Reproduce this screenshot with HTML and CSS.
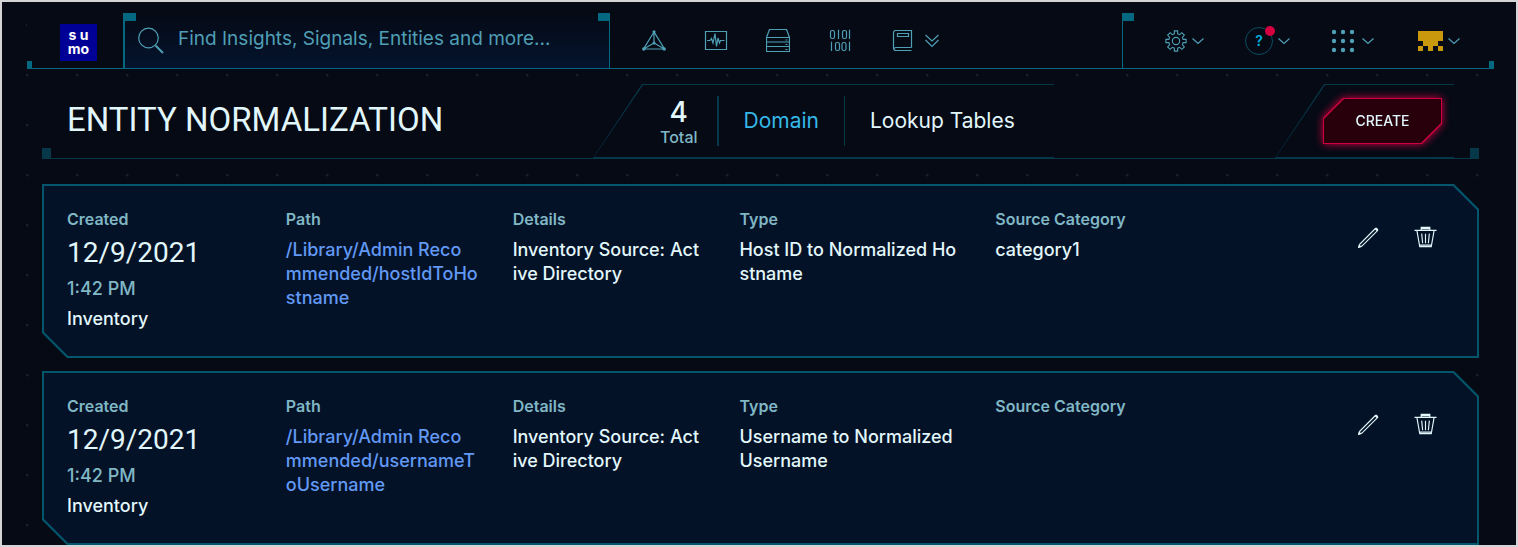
FILE: index.html
```
<!DOCTYPE html>
<html lang="en">
<head>
<meta charset="utf-8">
<title>Entity Normalization</title>
<link rel="stylesheet" href="styles.css">
</head>
<body>
<svg class="sprite" width="0" height="0" aria-hidden="true">
  <symbol id="chevron" viewBox="0 0 12 8"><path d="M.5 1.500 6 6.500 11.500 1.500"/></symbol>
  <symbol id="pencil" viewBox="0 0 24 24"><path d="M1.800 22.200 3 18.800 19.200 2.600C20 1.800 22.200 4 21.400 4.800L5.200 21Z"/><path d="M1.200 22.800 2 19 5 22ZM18.400 3.200 20.800 5.600 22.200 4 20 1.800Z" class="solid"/></symbol>
  <symbol id="trash" viewBox="0 0 24 24"><path d="M.5 4.500H23.500M7.500 4V1.500H16.500V4M3 4.500 6 21.500H18L21 4.500M8 8 9 18M12 8V18M16 8 15 18M7.500 2.800H16.500M5.800 20H18.200"/></symbol>
</svg>

<header class="topbar">
  <a class="logo" href="#" aria-label="Sumo home"><span class="logo-mark">s u<br>mo</span></a>
  <form class="search" role="search">
    <svg class="search-icon" viewBox="0 0 26 27" aria-hidden="true"><circle cx="10.500" cy="11" r="9.800"/><path class="handle" d="M17.500 18.500 25 26"/></svg>
    <input type="search" aria-label="Search" placeholder="Find Insights, Signals, Entities and more...">
  </form>
  <nav class="nav" aria-label="Main">
    <a href="#" aria-label="Insights"><svg viewBox="0 0 24 24"><path d="M12 3 1.500 20H22.500ZM12 3V14M12 14 1.500 20M12 14 22.500 20"/><g class="solid"><circle cx="12" cy="2.800" r="1.600"/><circle cx="12" cy="14" r="1.500"/><circle cx="1.800" cy="20" r="1.700"/><circle cx="22.200" cy="20" r="1.700"/></g></svg></a>
    <a href="#" aria-label="Signals"><svg viewBox="0 0 24 24"><path d="M1.500 2.500H22.500V20.500H1.500Z"/><path d="M3 11.500H6L7.500 9.500 9 14 11 4.500 12.500 17.500 14 9 15.500 14 16.500 11.500H20.500"/></svg></a>
    <a href="#" aria-label="Entities"><svg viewBox="0 0 24 24"><path d="M.5 8.500 3.500.5H20.500L23.500 8.500V22.500H.5ZM.5 8.500H23.500M.5 13H23.500M.5 17.500H23.500"/><path d="M19.500 11H21.500M19.500 15.500H21.500M19.500 20.500H21.500"/></svg></a>
    <a href="#" aria-label="Records"><svg viewBox="0 0 24 24"><rect x="2.500" y="1.500" width="4" height="8" rx="1.800"/><rect x="14.500" y="1.500" width="4" height="8" rx="1.800"/><rect x="7.500" y="13.500" width="4" height="8" rx="1.800"/><rect x="14" y="13.500" width="4" height="8" rx="1.800"/><path d="M10.500.8V10M21.500.8V10M3.500 12.800V22M21.500 12.800V22"/></svg></a>
    <a class="with-more" href="#" aria-label="Content"><svg viewBox="0 0 24 24"><path d="M21.500 18.500V1.500H5.500Q3.500 1.500 3.500 4V19Q3.500 21.500 6 21.500H21.500M21.500 18.500H6Q4 18.500 4 20M7.500 4.500H18.500V7.500H7.500Z"/></svg><svg class="more" viewBox="0 0 14 14"><path d="M.5 1 7 7 13.500 1M.5 6 7 12.500 13.500 6"/></svg></a>
  </nav>
  <div class="tools">
    <button type="button" aria-label="Settings"><svg class="gear" viewBox="0 0 24 24"><circle cx="12" cy="12" r="4"/><path d="M10.200 1H13.800V4.200L16 5.100 18.400 2.900 21.100 5.600 18.900 8 19.800 10.200H23V13.800H19.800L18.900 16 21.100 18.400 18.400 21.100 16 18.900 13.800 19.800V23H10.200V19.800L8 18.900 5.600 21.100 2.900 18.400 5.100 16 4.200 13.800H1V10.200H4.200L5.100 8 2.900 5.600 5.600 2.900 8 5.100 10.200 4.200Z"/></svg><svg class="chev"><use href="#chevron"/></svg></button>
    <button type="button" aria-label="Help"><span class="help">?</span><svg class="chev"><use href="#chevron"/></svg></button>
    <button class="launcher" type="button" aria-label="Apps"><svg class="apps solid" viewBox="0 0 24 24"><circle cx="3" cy="3" r="2.200"/><circle cx="12" cy="3" r="2.200"/><circle cx="21" cy="3" r="2.200"/><circle cx="3" cy="12" r="2.200"/><circle cx="12" cy="12" r="2.200"/><circle cx="21" cy="12" r="2.200"/><circle cx="3" cy="21" r="2.200"/><circle cx="12" cy="21" r="2.200"/><circle cx="21" cy="21" r="2.200"/></svg><svg class="chev"><use href="#chevron"/></svg></button>
    <button class="account" type="button" aria-label="Account"><svg class="avatar" viewBox="0 0 25 20"><path d="M0 0H25V10H20V15H25V20H20V15H15V20H10V15H5V20H0V15H5V10H0Z"/></svg><svg class="chev"><use href="#chevron"/></svg></button>
  </div>
</header>

<main class="page">
  <section class="titlebar">
    <h1>ENTITY NORMALIZATION</h1>
    <div class="panel summary">
      <div class="total"><strong>4</strong><span>Total</span></div>
      <a class="tab active" href="#" aria-current="page">Domain</a>
      <a class="tab" href="#">Lookup Tables</a>
    </div>
    <div class="panel action">
      <div class="glow"><button type="button" class="create">CREATE</button></div>
    </div>
  </section>

  <article class="card">
    <div class="field created">
      <h2>Created</h2>
      <p class="date">12/9/2021</p>
      <p class="time">1:42 PM</p>
      <p>Inventory</p>
    </div>
    <div class="field"><h2>Path</h2><a href="#">/Library/Admin Reco<br>mmended/hostIdToHo<br>stname</a></div>
    <div class="field"><h2>Details</h2><p>Inventory Source: Act<br>ive Directory</p></div>
    <div class="field"><h2>Type</h2><p>Host ID to Normalized Ho<br>stname</p></div>
    <div class="field"><h2>Source Category</h2><p>category1</p></div>
    <div class="actions">
      <button type="button" aria-label="Edit"><svg><use href="#pencil"/></svg></button>
      <button type="button" aria-label="Delete"><svg><use href="#trash"/></svg></button>
    </div>
  </article>

  <article class="card">
    <div class="field created">
      <h2>Created</h2>
      <p class="date">12/9/2021</p>
      <p class="time">1:42 PM</p>
      <p>Inventory</p>
    </div>
    <div class="field"><h2>Path</h2><a href="#">/Library/Admin Reco<br>mmended/usernameT<br>oUsername</a></div>
    <div class="field"><h2>Details</h2><p>Inventory Source: Act<br>ive Directory</p></div>
    <div class="field"><h2>Type</h2><p>Username to Normalized<br>Username</p></div>
    <div class="field"><h2>Source Category</h2></div>
    <div class="actions">
      <button type="button" aria-label="Edit"><svg><use href="#pencil"/></svg></button>
      <button type="button" aria-label="Delete"><svg><use href="#trash"/></svg></button>
    </div>
  </article>
</main>
<div class="frame"></div>
</body>
</html>
```
FILE: styles.css
```
:root {
  --bg: #050a15;
  --line: #036880;
  --line-dim: #07384a;
  --icon: #4f9fb5;
  --text: #e2f7fb;
  --muted: #80b7c5;
}
* { box-sizing: border-box; }
html { background: var(--bg); }
body {
  margin: 0;
  padding: 2px 0 0;
  color: var(--text);
  font: 500 18px/24px Inter, "Open Sans", sans-serif;
  background: radial-gradient(circle at 1px 1px, #14202b 1px, transparent 2px) 26px 24px / 50px 50px, var(--bg);
}
h1, h2, p { margin: 0; font-weight: 500; }
a { color: inherit; text-decoration: none; }
button { padding: 0; border: 0; background: none; color: inherit; font: inherit; cursor: pointer; }
svg { display: block; fill: none; stroke: currentColor; stroke-width: 1.2; }
.sprite { position: absolute; }
.solid { fill: currentColor; stroke: none; }

/* Window edge, above the scrolling content */
.frame {
  position: fixed;
  inset: 0;
  border: 2px solid #d2d4d5;
  pointer-events: none;
}

/* Top bar */
.topbar {
  position: relative;
  display: flex;
  height: 67px;
  margin: 0 24px 0 27px;
  padding-top: 11px;
  color: var(--icon);
  background: var(--bg);
  border-bottom: 1px solid var(--line);
}
.topbar::before, .topbar::after {
  content: "";
  position: absolute;
  bottom: 0;
  width: 5px;
  height: 7px;
  background: var(--line);
}
.topbar::before { left: 0; }
.topbar::after { right: 0; }
.logo { flex: none; width: 96px; padding: 11px 0 0 33px; }
.logo-mark {
  display: block;
  width: 37px;
  height: 37px;
  padding-top: 4px;
  color: #fff;
  background: #000096;
  font-size: 14px;
  font-weight: 700;
  line-height: 14px;
  text-align: center;
}
.search {
  position: relative;
  flex: 0 1 487px;
  display: flex;
  align-items: center;
  gap: 14px;
  padding: 0 12px 0 13px;
  border-left: 2px solid var(--line);
  border-right: 1px solid var(--line);
  background: linear-gradient(#050a15, #04142e);
}
.search::before, .search::after, .tools::before {
  content: "";
  position: absolute;
  top: 0;
  width: 11px;
  height: 8px;
  background: var(--line);
}
.search::before, .tools::before { left: 0; }
.search::after { right: 0; }
.search-icon { flex: none; width: 26px; height: 27px; }
.search-icon .handle { stroke-width: 2; }
.search input {
  flex: 1;
  min-width: 0;
  height: 36px;
  padding: 0 0 4px;
  border: 0;
  outline: 0;
  color: var(--icon);
  background: none;
  font: 19px Inter, "Open Sans", sans-serif;
}
.search input::placeholder { color: var(--icon); opacity: 1; }
.nav { flex: 1; display: flex; align-items: center; gap: 38px; padding-left: 32px; }
.nav svg { width: 24px; height: 24px; }
.nav .with-more { display: flex; align-items: center; gap: 11px; }
.nav .more { width: 14px; height: 14px; }
.tools {
  position: relative;
  flex: none;
  width: 372px;
  display: flex;
  align-items: center;
  gap: 41px;
  padding: 0 34px 0 42px;
  border-left: 1px solid var(--line);
}
.tools button { display: flex; align-items: center; gap: 5px; }
.tools .launcher { gap: 7px; }
.tools .account { margin-left: auto; }
.chev { width: 12px; height: 8px; }
.gear { width: 22px; height: 22px; }
.apps { width: 24px; height: 24px; }
.avatar { width: 25px; height: 20px; fill: #c9980c; stroke: none; }
.help {
  position: relative;
  width: 28px;
  height: 28px;
  border: 1px solid #084d61;
  border-radius: 50%;
  color: #00aedb;
  font-size: 14px;
  font-weight: 600;
  line-height: 26px;
}
.help::after {
  content: "";
  position: absolute;
  top: -2px;
  right: -3px;
  width: 10px;
  height: 10px;
  border-radius: 50%;
  background: #d4003f;
}

/* Title bar */
.page { padding: 15px 39px 0 42px; }
.titlebar {
  position: relative;
  display: flex;
  align-items: stretch;
  height: 75px;
  margin-bottom: 25px;
  background: var(--bg);
  border-bottom: 1px solid var(--line-dim);
}
.titlebar::before, .titlebar::after {
  content: "";
  position: absolute;
  bottom: 0;
  width: 9px;
  height: 10px;
  background: var(--line-dim);
}
.titlebar::before { left: 0; }
.titlebar::after { right: 0; }
h1 { flex: 0 1 551px; padding-left: 25px; font: 400 33px/72px Roboto, sans-serif; white-space: nowrap; }
.panel {
  position: relative;
  z-index: 0;
  display: flex;
  background: var(--line-dim);
  clip-path: polygon(49px 0, 100% 0, 100% 100%, 0 100%);
}
.panel::before {
  content: "";
  position: absolute;
  z-index: -1;
  inset: 1px 0 1px 1px;
  background: var(--bg);
  clip-path: polygon(49px 0, 100% 0, 100% 100%, 0 100%);
}
.summary { width: 461px; padding: 12px 0 12px 67px; }
.total { padding-right: 19px; border-right: 2px solid var(--line-dim); text-align: center; }
.total strong { display: block; font-size: 28px; font-weight: 500; line-height: 32px; }
.total span { display: block; color: var(--muted); font-size: 16px; line-height: 18px; }
.tab { padding: 0 25px; font-size: 21px; font-weight: 400; line-height: 50px; white-space: nowrap; }
.tab.active { color: #35b8e8; border-right: 1px solid var(--line-dim); }
.action { width: 179px; margin: 0 25px 0 auto; padding: 14px 0 0 48px; }
.glow { filter: drop-shadow(0 0 4px #d4003f); }
.create {
  position: relative;
  z-index: 0;
  width: 119px;
  height: 46px;
  background: #cf003f;
  font: 500 14px/46px Inter, sans-serif;
  clip-path: polygon(20px 0, 100% 0, 100% 26px, 99px 100%, 0 100%, 0 20px);
}
.create::before {
  content: "";
  position: absolute;
  z-index: -1;
  inset: 1px;
  background: #28000b;
  clip-path: polygon(20px 0, 100% 0, 100% 24px, 97px 100%, 0 100%, 0 20px);
}

/* Entity cards */
.card {
  position: relative;
  z-index: 0;
  display: grid;
  grid-template-columns: 219fr 227fr 227fr 256fr 362fr auto;
  min-height: 174px;
  margin-bottom: 13px;
  padding: 25px 42px 25px 25px;
  background: #04566c;
  clip-path: polygon(0 0, calc(100% - 25px) 0, 100% 25px, 100% 100%, 25px 100%, 0 calc(100% - 25px));
}
.card:last-child { margin-bottom: 0; }
.card::before {
  content: "";
  position: absolute;
  z-index: -1;
  inset: 2px;
  background: #041227;
  clip-path: polygon(0 0, calc(100% - 24px) 0, 100% 24px, 100% 100%, 24px 100%, 0 calc(100% - 24px));
}
.field { display: flex; flex-direction: column; gap: 9px; white-space: nowrap; }
.field.created { gap: 6px; }
.field h2 { color: var(--muted); font-size: 16px; font-weight: 600; line-height: 20px; }
.field a { color: #6199f5; }
.field .date { font: 28px/36px Roboto, sans-serif; }
.field .time { color: var(--muted); }
.actions { display: flex; align-items: flex-start; gap: 34px; padding-top: 17px; }
.actions svg { width: 23px; height: 23px; }
```
